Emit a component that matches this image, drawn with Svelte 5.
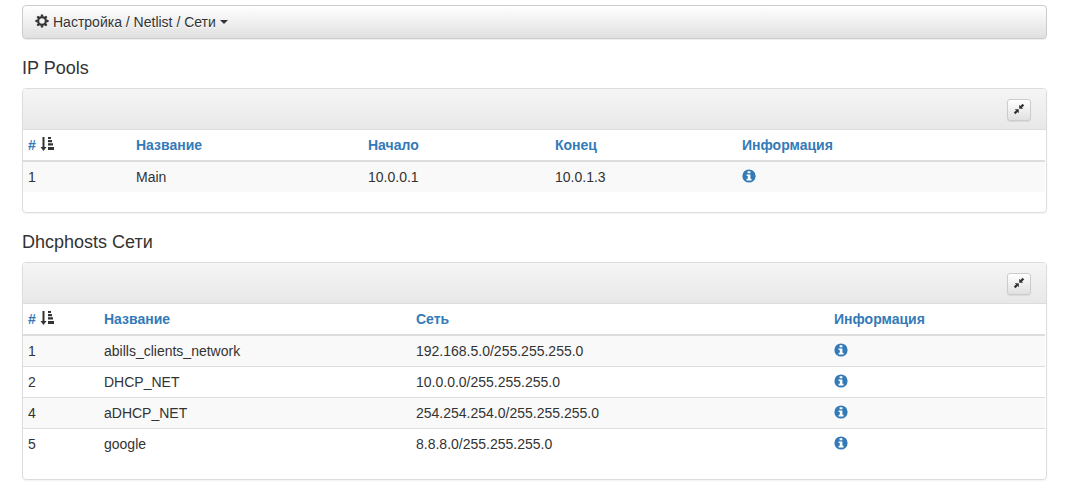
<script>
    const menuPath = 'Настройка / Netlist / Сети';

    // share: relative width of the column
    const tables = [
        {
            title: 'IP Pools',
            columns: [
                { label: '#', share: 108 },
                { label: 'Название', share: 232 },
                { label: 'Начало', share: 187 },
                { label: 'Конец', share: 187 },
                { label: 'Информация', share: 308 }
            ],
            rows: [['1', 'Main', '10.0.0.1', '10.0.1.3']]
        },
        {
            title: 'Dhcphosts Сети',
            columns: [
                { label: '#', share: 76 },
                { label: 'Название', share: 312 },
                { label: 'Сеть', share: 418 },
                { label: 'Информация', share: 216 }
            ],
            rows: [
                ['1', 'abills_clients_network', '192.168.5.0/255.255.255.0'],
                ['2', 'DHCP_NET', '10.0.0.0/255.255.255.0'],
                ['4', 'aDHCP_NET', '254.254.254.0/255.255.255.0'],
                ['5', 'google', '8.8.8.0/255.255.255.0']
            ]
        }
    ];

    let collapsed = $state([false, false]);

    function colWidth(table, col) {
        const total = table.columns.reduce((sum, c) => sum + c.share, 0);
        return (col.share / total) * 100;
    }
</script>

<main>
    <button class="btn menu" type="button">
        <svg class="icon" viewBox="0 0 14 14" aria-hidden="true">
            <g fill="currentColor">
                {#each [0, 45, 90, 135] as angle}
                    <path d="M6 .4h2l.5 2.4h-3zM6 13.600h2l.5-2.400h-3z" transform="rotate({angle} 7 7)" />
                {/each}
            </g>
            <circle cx="7" cy="7" r="3.800" fill="none" stroke="currentColor" stroke-width="2" />
        </svg>
        <span>{menuPath}</span>
        <span class="caret"></span>
    </button>

    {#each tables as table, t}
        <h4>{table.title}</h4>
        <section class="panel">
            <div class="panel-heading">
                <button
                        class="btn toggle"
                        type="button"
                        aria-label="Свернуть {table.title}"
                        onclick={() => (collapsed[t] = !collapsed[t])}>
                    <svg viewBox="0 0 12 12" aria-hidden="true">
                        <path fill="currentColor" d="M6.200 1.800v4h4L9 4.600l2.200-2.200L9.600.8 7.400 3zM5.800 10.200v-4h-4L3 7.400.8 9.600l1.600 1.600L4.600 9z" />
                    </svg>
                </button>
            </div>
            {#if !collapsed[t]}
                <table>
                    <colgroup>
                        {#each table.columns as col}
                            <col style="width: {colWidth(table, col)}%" />
                        {/each}
                    </colgroup>
                    <thead>
                        <tr>
                            {#each table.columns as col, i}
                                <th scope="col">
                                    <a href="#sort">{col.label}</a>
                                    {#if i === 0}
                                        <svg class="icon" viewBox="0 0 14 14" aria-hidden="true">
                                            <path fill="currentColor" d="M2.500 0h2v10h2l-3 4-3-4h2zM8 0h3v2H8zM8 3h4v2.200H8zM8 6.200h5v2.300H8zM8 10h6v3H8z" />
                                        </svg>
                                    {/if}
                                </th>
                            {/each}
                        </tr>
                    </thead>
                    <tbody>
                        {#each table.rows as row}
                            <tr>
                                {#each row as cell}
                                    <td>{cell}</td>
                                {/each}
                                <td>
                                    <a href="#info" aria-label="Информация {row[1]}">
                                        <svg class="icon" viewBox="0 0 14 14" aria-hidden="true">
                                            <circle cx="7" cy="7" r="6.600" fill="currentColor" />
                                            <path fill="#fff" d="M5.600 2.200h2.800v2H5.600zM4.600 5.500h3.800v4.300h1.100v1.700H4.600V9.800h1.200V7.100H4.600z" />
                                        </svg>
                                    </a>
                                </td>
                            </tr>
                        {/each}
                    </tbody>
                </table>
            {/if}
        </section>
    {/each}
</main>

<style>
    :global(body) {
        margin: 0;
        background: #fff;
    }

    main {
        padding: 5px 23px 19px 22px;
        font-family: "Liberation Sans", Arial, sans-serif;
        font-size: 14px;
        line-height: 20px;
        color: #333;
    }

    .btn {
        box-sizing: border-box;
        border: 1px solid #ccc;
        color: #333;
        font: inherit;
        text-shadow: 0 1px 0 #fff;
        background: linear-gradient(to bottom, #fff, #e0e0e0);
        box-shadow: 0 1px 1px rgba(0, 0, 0, 0.075);
        cursor: pointer;
    }

    .menu {
        display: flex;
        align-items: center;
        gap: 4px;
        width: 100%;
        padding: 6px 12px;
        border-radius: 4px;
    }

    .icon {
        display: inline-block;
        width: 14px;
        height: 14px;
        vertical-align: -1px;
    }

    .menu .icon {
        margin-bottom: 2px;
    }

    .caret {
        border-top: 4px solid;
        border-left: 4px solid transparent;
        border-right: 4px solid transparent;
    }

    h4 {
        margin: 19px 0 10px;
        font-size: 18px;
        font-weight: 500;
        line-height: 20px;
    }

    .panel {
        padding-bottom: 20px;
        border: 1px solid #ddd;
        border-radius: 4px;
        box-shadow: 0 1px 2px rgba(0, 0, 0, 0.05);
    }

    .panel-heading {
        display: flex;
        justify-content: flex-end;
        padding: 10px 15px 8px;
        border-bottom: 1px solid #ddd;
        border-radius: 3px 3px 0 0;
        background: linear-gradient(to bottom, #f5f5f5, #e8e8e8);
    }

    .toggle {
        display: flex;
        align-items: flex-start;
        justify-content: center;
        width: 24px;
        height: 22px;
        padding: 3px 0 0;
        border-radius: 3px;
    }

    .toggle svg {
        width: 12px;
        height: 12px;
    }

    table {
        width: calc(100% - 1px);
        table-layout: fixed;
        border-spacing: 0;
    }

    th,
    td {
        padding: 5px;
        text-align: left;
        vertical-align: top;
    }

    th {
        border-bottom: 2px solid #ddd;
    }

    tbody tr + tr td {
        border-top: 1px solid #ddd;
    }

    tbody tr:nth-child(odd) {
        background: #f9f9f9;
    }

    a {
        color: #337ab7;
        text-decoration: none;
    }
</style>
